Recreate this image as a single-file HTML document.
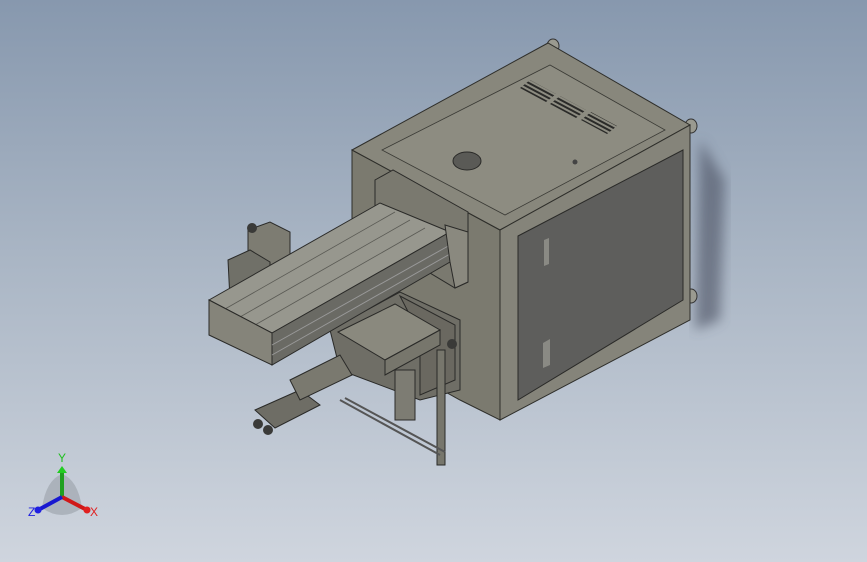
<!DOCTYPE html>
<html><head><style>
html,body{margin:0;padding:0;}
body{width:867px;height:562px;overflow:hidden;background:linear-gradient(180deg,#8798ae 0%,#a9b5c4 45%,#cfd5de 100%);}
svg{position:absolute;left:0;top:0;}
text{font-family:"Liberation Sans",sans-serif;}
</style></head><body>
<svg width="867" height="562" viewBox="0 0 867 562">
<defs>
<filter id="b" x="-20%" y="-20%" width="140%" height="140%"><feGaussianBlur stdDeviation="6"/></filter>
<pattern id="g" width="4" height="4" patternUnits="userSpaceOnUse" patternTransform="rotate(28)"><rect width="4" height="2" fill="#2a2a28"/></pattern>
</defs>
<polygon points="700,140 725,180 720,320 695,330" fill="#4a5060" opacity="0.6" filter="url(#b)"/>
<g fill="#9a9a90" stroke="#333" stroke-width="1">
<ellipse cx="553" cy="46" rx="6" ry="7"/><ellipse cx="691" cy="126" rx="6" ry="7"/><ellipse cx="691" cy="296" rx="6" ry="7"/>
</g>
<polygon points="352,150 500,230 500,420 460,400 352,340" fill="#7b7a6f" stroke="#2e2e2a" stroke-width="1"/>
<polygon points="352,150 548,43 690,125 500,230" fill="#88877c" stroke="#2e2e2a" stroke-width="1"/>
<polygon points="382,150 550,65 665,130 505,215" fill="#8d8c81" stroke="#3a3a35" stroke-width="0.8"/>
<ellipse cx="467" cy="161" rx="14" ry="9" fill="#5a5a56" stroke="#2a2a28"/>
<circle cx="575" cy="162" r="2.5" fill="#444"/>
<polygon points="520,88 530,80 556,94 546,102" fill="url(#g)"/>
<polygon points="550,104 560,96 586,110 576,118" fill="url(#g)"/>
<polygon points="581,120 591,112 617,126 607,134" fill="url(#g)"/>
<polygon points="500,230 690,125 690,320 500,420" fill="#85847a" stroke="#2e2e2a" stroke-width="1"/>
<polygon points="518,236 683,150 683,300 518,400" fill="#5e5e5c" stroke="#2a2a28" stroke-width="1"/>
<polygon points="544,240 549,238 549,264 544,266" fill="#8a8a84"/>
<polygon points="543,343 550,339 550,365 543,368" fill="#8a8a84"/>
<polygon points="375,180 393,170 468,212 468,282 455,288 375,240" fill="#7a796f" stroke="#2a2a28"/>
<polygon points="330,330 400,292 460,320 460,390 420,400 340,370" fill="#6f6e66" stroke="#2a2a28"/>
<polygon points="400,296 455,325 455,380 420,395 420,335" fill="#6a6860" stroke="#2a2a28"/>
<polygon points="338,332 395,304 440,330 385,360" fill="#8a897e" stroke="#2a2a28"/>
<polygon points="385,360 440,330 440,345 385,375" fill="#77766c" stroke="#2a2a28"/>
<rect x="395" y="370" width="20" height="50" fill="#7d7c73" stroke="#2a2a28"/>
<rect x="437" y="350" width="8" height="115" fill="#77766c" stroke="#2a2a28"/>
<path d="M340,400 L440,455 M345,398 L445,452" stroke="#555" stroke-width="2"/>
<polygon points="255,410 300,390 320,405 275,428" fill="#6e6d65" stroke="#2a2a28"/>
<polygon points="290,380 340,355 352,375 300,400" fill="#7a796f" stroke="#2a2a28"/>
<circle cx="258" cy="424" r="5" fill="#3a3a38"/><circle cx="268" cy="430" r="5" fill="#3a3a38"/>
<circle cx="452" cy="344" r="5" fill="#3a3a38"/>
<polygon points="248,230 270,222 290,232 290,262 268,272 248,262" fill="#7d7c72" stroke="#2a2a28"/>
<polygon points="228,260 250,250 270,262 270,300 230,300" fill="#707068" stroke="#2a2a28"/>
<circle cx="252" cy="228" r="5" fill="#3a3a38"/>
<polygon points="209,300 380,203 450,232 272,333" fill="#97978e" stroke="#2a2a28"/>
<g stroke="#5a5a54" stroke-width="0.8">
<path d="M225,309 L395,212 M240,317 L410,220 M255,325 L425,228"/>
</g>
<polygon points="209,300 272,333 272,365 209,335" fill="#85847a" stroke="#2a2a28"/>
<polygon points="272,333 450,232 450,262 272,365" fill="#6a6a64" stroke="#2a2a28"/>
<path d="M272,345 L450,245 M272,355 L450,254" stroke="#999" stroke-width="1"/>
<polygon points="445,225 468,232 468,282 455,288 450,262" fill="#8a897f" stroke="#2a2a28"/>
<path d="M62,474 Q78,480 82,508 Q62,522 42,508 Q46,480 62,474z" fill="#9aa0a8" opacity="0.6"/>
<line x1="62" y1="497" x2="62" y2="472" stroke="#1fa01f" stroke-width="4"/>
<polygon points="57,473 67,473 62,466" fill="#22cc22"/>
<line x1="62" y1="497" x2="85" y2="509" stroke="#d01818" stroke-width="4"/>
<circle cx="87" cy="510" r="3.5" fill="#e02020"/>
<line x1="62" y1="497" x2="40" y2="509" stroke="#1818d0" stroke-width="4"/>
<circle cx="38" cy="510" r="3.5" fill="#2020e0"/>
<text x="58" y="462" font-size="12" fill="#20c020">Y</text>
<text x="90" y="516" font-size="12" fill="#e02020">X</text>
<text x="28" y="516" font-size="12" fill="#2020e0">Z</text>
</svg>
</body></html>
